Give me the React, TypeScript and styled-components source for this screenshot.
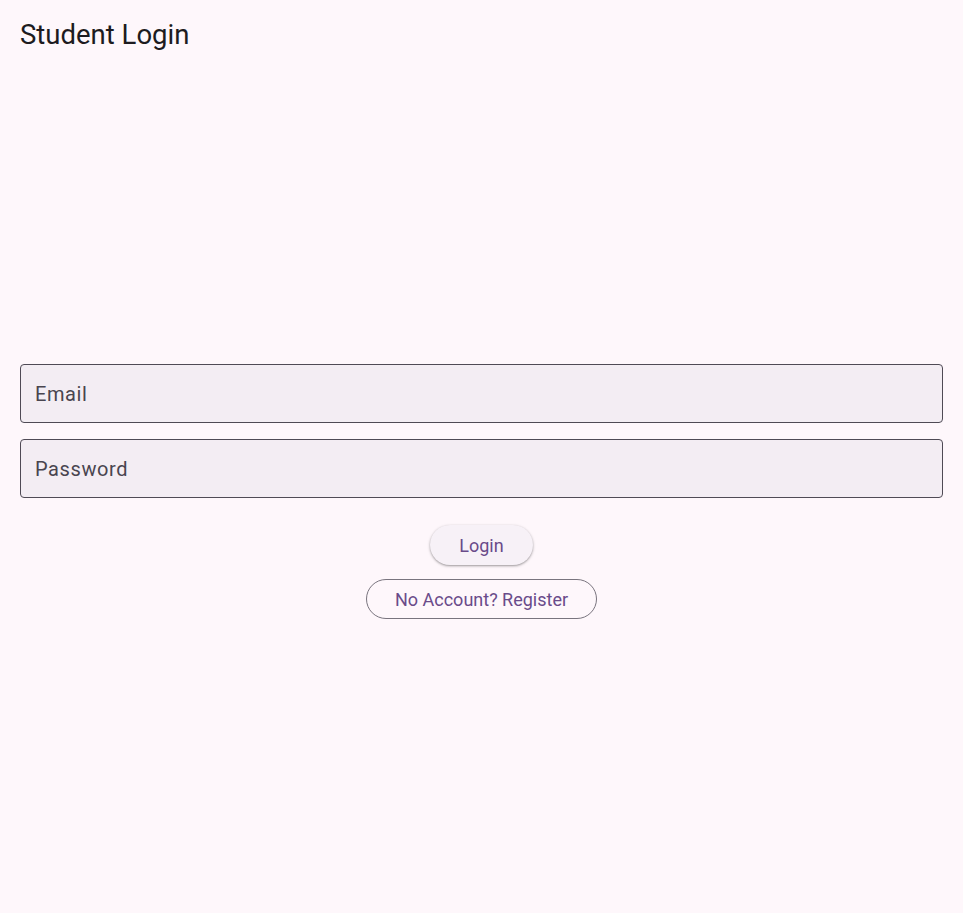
import React from "react";
import styled, { createGlobalStyle } from "styled-components";

const Global = createGlobalStyle`
  html, body { margin: 0; padding: 0; background: #fef7fb; }
  body { font-family: Roboto, "Noto Sans", sans-serif; }
  * { box-sizing: border-box; }
`;

const Page = styled.div`
  width: 963px;
  height: 913px;
  display: flex;
  flex-direction: column;
  background: #fef7fb;
`;

const AppBar = styled.header`
  height: 70px;
  flex: none;
  display: flex;
  align-items: center;
  padding: 0 20px;
`;

const Title = styled.h1`
  margin: 0;
  font-size: 27.5px;
  font-weight: 400;
  color: #1d1b20;
  line-height: 1;
`;

const Body = styled.main`
  flex: 1;
  display: flex;
  flex-direction: column;
  justify-content: center;
  padding: 0 20px;
`;

const Form = styled.div`
  display: flex;
  flex-direction: column;
  align-items: center;
`;

const Field = styled.div<{ $mb: number }>`
  width: 100%;
  height: 59px;
  margin-bottom: ${(p) => p.$mb}px;
  background: #f3edf3;
  border: 1px solid #4f4a55;
  border-radius: 4px;
  display: flex;
  align-items: center;
  padding: 0 14px;
  font-size: 20px;
  letter-spacing: 0.6px;
  color: #49454f;
`;

const ElevatedButton = styled.button`
  height: 40px;
  padding: 0 29px;
  border: none;
  border-radius: 20px;
  background: #f7f1f7;
  color: #6a4b8a;
  font-family: Roboto, sans-serif;
  font-size: 18px;
  box-shadow: 0 1px 2px rgba(0, 0, 0, 0.3), 0 1px 3px 1px rgba(0, 0, 0, 0.08);
  margin-bottom: 14px;
`;

const OutlinedButton = styled.button`
  height: 40px;
  padding: 0 28px;
  border: 1px solid #79747e;
  border-radius: 20px;
  background: transparent;
  color: #6a4b8a;
  font-family: Roboto, sans-serif;
  font-size: 18px;
`;

export default function App() {
  return (
    <Page>
      <Global />
      <AppBar>
        <Title>Student Login</Title>
      </AppBar>
      <Body>
        <Form>
          <Field $mb={16}>Email</Field>
          <Field $mb={27}>Password</Field>
          <ElevatedButton>Login</ElevatedButton>
          <OutlinedButton>No Account? Register</OutlinedButton>
        </Form>
      </Body>
    </Page>
  );
}
